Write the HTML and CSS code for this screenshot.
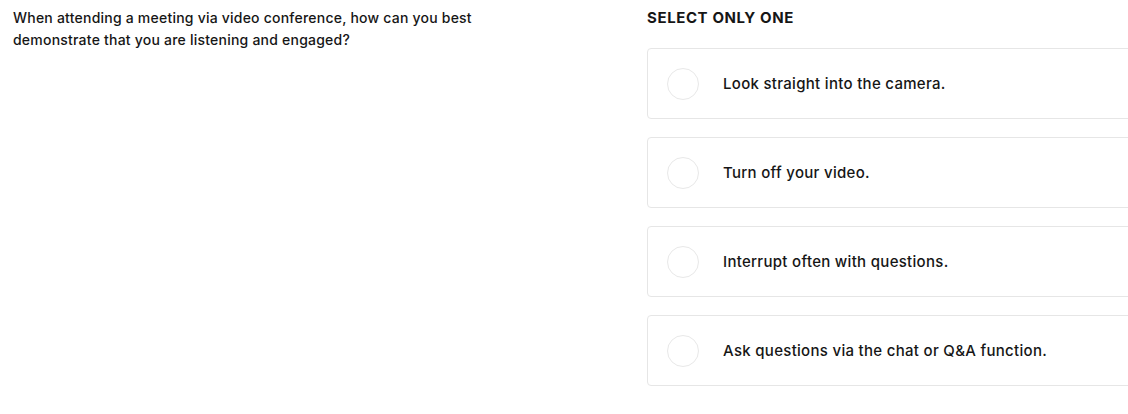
FILE: index.html
```html
<!DOCTYPE html>
<html lang="en">
<head>
<meta charset="utf-8">
<title>Question</title>
<link rel="stylesheet" href="styles.css">
</head>
<body>
<main class="layout">
  <section class="question">
    <p class="prompt">When attending a meeting via video conference, how can you best demonstrate that you are listening and engaged?</p>
  </section>
  <section class="answers">
    <div class="label">SELECT ONLY ONE</div>
    <ul class="options">
      <li class="option"><span class="radio"></span><span class="option-text">Look straight into the camera.</span></li>
      <li class="option"><span class="radio"></span><span class="option-text">Turn off your video.</span></li>
      <li class="option"><span class="radio"></span><span class="option-text">Interrupt often with questions.</span></li>
      <li class="option"><span class="radio"></span><span class="option-text">Ask questions via the chat or Q&amp;A function.</span></li>
    </ul>
  </section>
</main>
</body>
</html>
```
FILE: styles.css
```css
html, body {
  margin: 0;
  padding: 0;
  background: #ffffff;
  overflow: hidden;
}
body {
  width: 1128px;
  height: 414px;
  font-family: "Inter", "Liberation Sans", sans-serif;
  color: #161616;
  font-size: 14px;
}
.layout {
  display: grid;
  grid-template-columns: 634px 520px;
  padding: 7px 0 0 13px;
}
.prompt {
  margin: 0;
  font-weight: 450;
  line-height: 22px;
  letter-spacing: 0.22px;
  max-width: 500px;
}
.label {
  font-size: 15px;
  font-weight: 700;
  line-height: 22px;
  letter-spacing: 0.6px;
}
.options {
  list-style: none;
  margin: 19px 0 0;
  padding: 0;
  display: flex;
  flex-direction: column;
  gap: 18px;
}
.option {
  box-sizing: border-box;
  height: 71px;
  border: 1px solid #e6e6e6;
  border-radius: 4px;
  display: flex;
  align-items: center;
  padding-left: 19px;
  gap: 24px;
}
.radio {
  box-sizing: border-box;
  width: 32px;
  height: 32px;
  border: 1.5px solid #e8e8e8;
  border-radius: 50%;
  flex: none;
}
.option-text {
  font-size: 15px;
  font-weight: 450;
  letter-spacing: 0.3px;
  line-height: 20px;
}
```
